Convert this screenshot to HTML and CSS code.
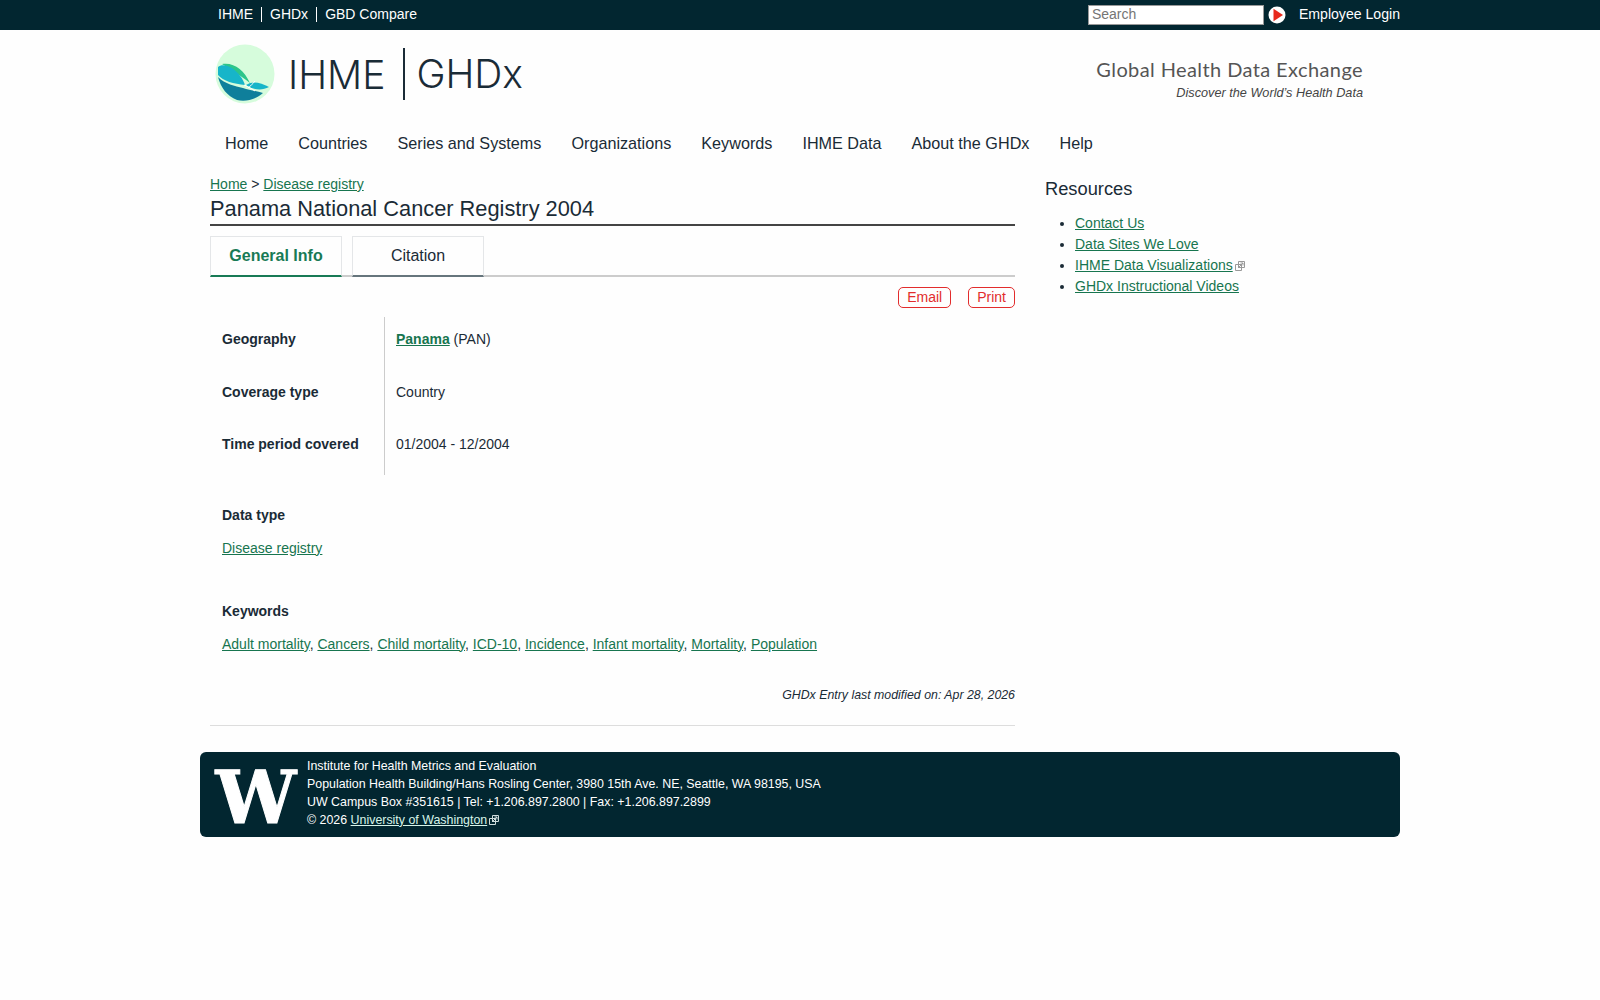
FILE: index.html
```html
<!DOCTYPE html>
<html lang="en">
<head>
    <meta charset="UTF-8">
    <title>Panama National Cancer Registry 2004 | GHDx</title>
    <link rel="stylesheet" href="styles.css">
</head>
<body>
    <div class="topbar">
        <div class="topbar-inner">
            <ul class="top-links">
                <li><a href="#">IHME</a></li>
                <li><a href="#">GHDx</a></li>
                <li><a href="#">GBD Compare</a></li>
            </ul>
            <div class="top-right">
                <input class="search" type="text" placeholder="Search">
                <svg class="search-go" viewBox="0 0 18 18" width="18" height="18">
                    <circle cx="9" cy="9" r="8.5" fill="#fff"/>
                    <path d="M5.5 2.8 L15 9 L5.5 15.2 Z" fill="#e8291c"/>
                </svg>
                <a class="login" href="#">Employee Login</a>
            </div>
        </div>
    </div>

    <div class="wrap">
        <header class="header">
            <div class="brand">
                <svg class="brand-mark" viewBox="0 0 60 60" width="60" height="60">
                    <circle cx="30" cy="30" r="29.5" fill="#d6fcdc"/>
                    <path d="M7 20 C19 18 29 26 35 39 C30 35 24 31 18 27 Z" fill="#2cc58a"/>
                    <path d="M3 23 C6 20 12 21 17 24 C24 29 28 35 30 41 C19 40 8 37 3 31 Z" fill="#17b5c9"/>
                    <path d="M3 33 C10 40 20 42 28 44 C34 46 42 47 48 49 C40 56 30 58 22 56 C12 52 6 44 3 33 Z" fill="#0f7f9b"/>
                    <path d="M31 41 C38 36 46 39 54 43 C47 47 38 46 31 41 Z" fill="#17b5c9"/>
                    <path d="M29 41 C34 43 37 45 40 47 M40 37 C38 40 35 42 33 44" stroke="#fff" stroke-width="1" fill="none"/>
                </svg>
                <span class="brand-name">IHME</span>
                <span class="brand-name brand-sep">GHDx</span>
            </div>
            <div class="tagline">
                <div class="tagline-title">Global Health Data Exchange</div>
                <div class="tagline-sub">Discover the World’s Health Data</div>
            </div>
        </header>

        <nav class="nav">
            <a href="#">Home</a>
            <a href="#">Countries</a>
            <a href="#">Series and Systems</a>
            <a href="#">Organizations</a>
            <a href="#">Keywords</a>
            <a href="#">IHME Data</a>
            <a href="#">About the GHDx</a>
            <a href="#">Help</a>
        </nav>

        <div class="columns">
            <main class="content">
                <div class="breadcrumb"><a href="#">Home</a> &gt; <a href="#">Disease registry</a></div>
                <h1 class="title">Panama National Cancer Registry 2004</h1>

                <div class="tabs">
                    <a class="tab active" href="#">General Info</a>
                    <a class="tab" href="#">Citation</a>
                </div>

                <div class="actions">
                    <a class="pill" href="#">Email</a>
                    <a class="pill" href="#">Print</a>
                </div>

                <div class="facts">
                    <div class="fact-label">Geography</div>
                    <div class="fact-value"><a class="strong" href="#">Panama</a> (PAN)</div>
                    <div class="fact-label">Coverage type</div>
                    <div class="fact-value">Country</div>
                    <div class="fact-label">Time period covered</div>
                    <div class="fact-value">01/2004 - 12/2004</div>
                </div>

                <section class="block block-type">
                    <h3>Data type</h3>
                    <p><a href="#">Disease registry</a></p>
                </section>

                <section class="block block-keywords">
                    <h3>Keywords</h3>
                    <p><a href="#">Adult mortality</a>, <a href="#">Cancers</a>, <a href="#">Child mortality</a>, <a href="#">ICD-10</a>, <a href="#">Incidence</a>, <a href="#">Infant mortality</a>, <a href="#">Mortality</a>, <a href="#">Population</a></p>
                </section>

                <div class="modified">GHDx Entry last modified on: Apr 28, 2026</div>
            </main>

            <aside class="sidebar">
                <h2>Resources</h2>
                <ul>
                    <li><a href="#">Contact Us</a></li>
                    <li><a href="#">Data Sites We Love</a></li>
                    <li><a href="#">IHME Data Visualizations</a><svg class="ext" viewBox="0 0 10 10" width="10" height="10"><path d="M3.5 .5h6v6h-6z M.5 3.5h6v6h-6z M3 7 L8 2 M5.5 2H8V4.5" fill="none" stroke="#999" stroke-width="1"/></svg></li>
                    <li><a href="#">GHDx Instructional Videos</a></li>
                </ul>
            </aside>
        </div>

        <footer class="footer">
            <div class="uw-mark">W</div>
            <div class="footer-text">
                <div>Institute for Health Metrics and Evaluation</div>
                <div>Population Health Building/Hans Rosling Center, 3980 15th Ave. NE, Seattle, WA 98195, USA</div>
                <div>UW Campus Box #351615 | Tel: +1.206.897.2800 | Fax: +1.206.897.2899</div>
                <div>© 2026 <a href="#">University of Washington</a><svg class="ext" viewBox="0 0 10 10" width="10" height="10"><path d="M3.5 .5h6v6h-6z M.5 3.5h6v6h-6z M3 7 L8 2 M5.5 2H8V4.5" fill="none" stroke="#cfdcdc" stroke-width="1"/></svg></div>
            </div>
        </footer>
    </div>
</body>
</html>
```

FILE: styles.css
```css
* {
    box-sizing: border-box;
}
body {
    margin: 0;
    background: #fefefe;
    color: #1a2b36;
    font-family: "Liberation Sans", Arial, sans-serif;
    font-size: 14px;
}
a {
    color: #17754f;
}

.topbar {
    background: #022630;
    height: 30px;
}
.topbar-inner {
    width: 1190px;
    margin-left: 210px;
    height: 30px;
    display: flex;
    justify-content: space-between;
    align-items: center;
}
.top-links {
    list-style: none;
    margin: -1px 0 0;
    padding: 0;
    display: flex;
}
.top-links li {
    padding: 0 8px;
    line-height: 15px;
    border-left: 1px solid #fff;
}
.top-links li:first-child {
    border-left: none;
}
.top-links a {
    color: #fff;
    text-decoration: none;
    font-size: 14px;
}
.top-right {
    display: flex;
    align-items: center;
}
.search {
    width: 176px;
    height: 20px;
    padding: 0 3px 2px;
    border: 1px solid #999;
    background: #fff;
    font-family: inherit;
    font-size: 14px;
}
.search-go {
    margin-left: 4px;
}
.login {
    margin: -2px 0 0 13px;
    color: #fff;
    text-decoration: none;
    font-size: 14.1px;
}

.wrap {
    width: 1200px;
    margin-left: 200px;
}
.header {
    height: 90px;
    padding: 14px 37px 0 15px;
    display: flex;
    justify-content: space-between;
}
.brand {
    display: flex;
    align-items: center;
    height: 60px;
}
.brand-name {
    font-family: Inter, sans-serif;
    font-weight: 300;
    font-size: 39px;
    color: #1a2b36;
    margin-left: 13px;
}
.brand-sep {
    margin-left: 18px;
    padding-left: 11px;
    border-left: 2px solid #1a2b36;
    line-height: 52px;
}
.tagline {
    text-align: right;
    padding-top: 13px;
}
.tagline-title {
    font-family: Lato, sans-serif;
    font-size: 20px;
    letter-spacing: .4px;
    color: #555;
}
.tagline-sub {
    margin-top: 5px;
    font-size: 12.7px;
    font-style: italic;
    color: #444;
}

.nav {
    display: flex;
    padding-left: 10px;
    height: 48px;
    margin-top: -1px;
    margin-bottom: 2px;
    align-items: center;
}
.nav a {
    padding: 0 15px;
    font-size: 16.2px;
    color: #1a2b36;
    text-decoration: none;
}

.columns {
    display: flex;
    padding-left: 10px;
}
.content {
    width: 805px;
    border-bottom: 1px solid #ddd;
    padding-bottom: 23px;
}
.breadcrumb {
    margin-top: 6px;
    line-height: 18px;
}
.title {
    margin: 3px 0 0;
    padding-bottom: 2px;
    font-size: 21.8px;
    font-weight: 400;
    line-height: 26px;
    border-bottom: 2px solid #444;
}

.tabs {
    display: flex;
    gap: 10px;
    margin-top: 10px;
    border-bottom: 2px solid #ccc;
}
.tab {
    width: 132px;
    height: 41px;
    margin-bottom: -2px;
    text-align: center;
    line-height: 38px;
    font-size: 16px;
    color: #1a2b36;
    text-decoration: none;
    border: 1px solid #e4e6e8;
    border-bottom: 2px solid #66757c;
}
.tab.active {
    color: #187a55;
    font-weight: 700;
    border-bottom-color: #187a55;
}

.actions {
    display: flex;
    justify-content: flex-end;
    gap: 17px;
    margin-top: 10px;
}
.pill {
    height: 21px;
    padding: 0 8px;
    line-height: 19px;
    color: #e22c2c;
    text-decoration: none;
    border: 1px solid #e22c2c;
    border-radius: 5px;
}

.facts {
    display: grid;
    grid-template-columns: 174px 1fr;
    grid-auto-rows: 52.5px;
    margin-top: 9px;
    width: 100%;
}
.fact-label {
    padding: 14px 0 0 12px;
    font-weight: 700;
}
.fact-value {
    padding: 14px 0 0 11px;
    border-left: 1px solid #ccc;
}
.strong {
    font-weight: 700;
}

.block {
    padding-left: 12px;
}
.block h3 {
    margin: 0;
    font-size: 14px;
    line-height: 18px;
}
.block p {
    margin: 15px 0 0;
    line-height: 18px;
}
.block-type {
    margin-top: 31px;
}
.block-keywords {
    margin-top: 45px;
}

.modified {
    margin-top: 35px;
    text-align: right;
    font-size: 12.35px;
    font-style: italic;
}

.sidebar {
    margin-left: 30px;
}
.sidebar h2 {
    margin: 8px 0 0;
    font-size: 18.3px;
    font-weight: 400;
    line-height: 24px;
}
.sidebar ul {
    margin: 12px 0 0;
    padding-left: 30px;
}
.sidebar li {
    line-height: 21px;
}
.ext {
    margin-left: 2px;
    vertical-align: -1px;
}

.footer {
    display: flex;
    height: 85px;
    margin-top: 26px;
    padding: 5px 0 0 15px;
    background: #022630;
    border-radius: 6px;
    color: #fff;
}
.uw-mark {
    width: 82px;
    font-family: "DejaVu Serif", serif;
    font-weight: 700;
    font-size: 72px;
    line-height: 82px;
    text-align: center;
    -webkit-text-stroke: 1px #fff;
}
.footer-text {
    margin-left: 10px;
    font-size: 12.4px;
    line-height: 18px;
}
.footer-text a {
    color: #d8f5ea;
}
```
